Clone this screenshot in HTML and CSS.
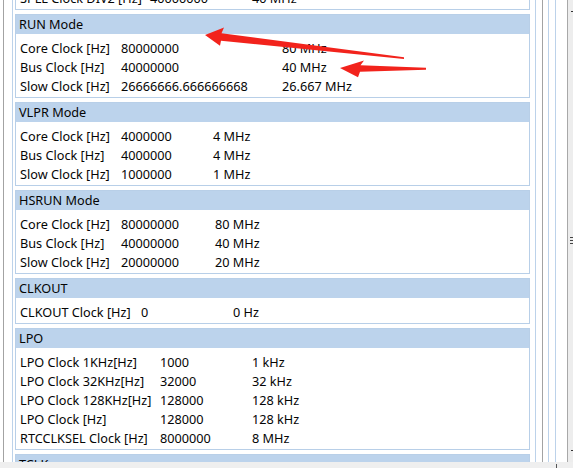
FILE: index.html
```html
<!DOCTYPE html>
<html>
<head>
<meta charset="utf-8">
<link rel="stylesheet" href="styles.css">
</head>
<body>
<div class="screen">
  <div class="main">
    <div class="outer">
      <div class="inner">
        <div class="list">
          <section class="sec">
            <div class="hdr">SPLL</div>
            <div class="rows c-spll">
              <span>SPLL Clock DIV2 [Hz]</span><span>40000000</span><span>40 MHz</span>
            </div>
          </section>
          <section class="sec">
            <div class="hdr">RUN Mode</div>
            <div class="rows c-run">
              <span>Core Clock [Hz]</span><span>80000000</span><span>80 MHz</span>
              <span>Bus Clock [Hz]</span><span>40000000</span><span>40 MHz</span>
              <span>Slow Clock [Hz]</span><span>26666666.666666668</span><span>26.667 MHz</span>
            </div>
          </section>
          <section class="sec">
            <div class="hdr">VLPR Mode</div>
            <div class="rows c-vlpr">
              <span>Core Clock [Hz]</span><span>4000000</span><span>4 MHz</span>
              <span>Bus Clock [Hz]</span><span>4000000</span><span>4 MHz</span>
              <span>Slow Clock [Hz]</span><span>1000000</span><span>1 MHz</span>
            </div>
          </section>
          <section class="sec">
            <div class="hdr">HSRUN Mode</div>
            <div class="rows c-hsrun">
              <span>Core Clock [Hz]</span><span>80000000</span><span>80 MHz</span>
              <span>Bus Clock [Hz]</span><span>40000000</span><span>40 MHz</span>
              <span>Slow Clock [Hz]</span><span>20000000</span><span>20 MHz</span>
            </div>
          </section>
          <section class="sec">
            <div class="hdr">CLKOUT</div>
            <div class="rows c-clkout">
              <span>CLKOUT Clock [Hz]</span><span>0</span><span>0 Hz</span>
            </div>
          </section>
          <section class="sec">
            <div class="hdr">LPO</div>
            <div class="rows c-lpo">
              <span>LPO Clock 1KHz[Hz]</span><span>1000</span><span>1 kHz</span>
              <span>LPO Clock 32KHz[Hz]</span><span>32000</span><span>32 kHz</span>
              <span>LPO Clock 128KHz[Hz]</span><span>128000</span><span>128 kHz</span>
              <span>LPO Clock [Hz]</span><span>128000</span><span>128 kHz</span>
              <span>RTCCLKSEL Clock [Hz]</span><span>8000000</span><span>8 MHz</span>
            </div>
          </section>
          <section class="sec">
            <div class="hdr">TCLK</div>
            <div class="rows c-lpo">
              <span>TCLK0 Clock [Hz]</span><span>0</span><span>0 Hz</span>
            </div>
          </section>
        </div>
      </div>
    </div>
    <div class="side"></div>
    <div class="gapcol"></div>
    <div class="vbar">
      <i class="dash d-top"></i>
      <i class="grip"></i>
      <i class="dash d-bot"></i>
    </div>
  </div>
  <div class="hbar"><i class="hmark"></i></div>

  <svg class="arrows" width="573" height="468" viewBox="0 0 573 468">
    <polygon fill="#f2231c" points="205,35 224,27.5 221.5,33.3 404,57.2 404,59 221,40.8 220,45.8"/>
    <polygon fill="#f2231c" points="340,68 364,60.5 360.5,65.3 426,67.8 426,69.8 360,71.8 358,77.2"/>
  </svg>
</div>
</body>
</html>
```

FILE: styles.css
```css
* { box-sizing: border-box; }
html, body { margin: 0; padding: 0; }
body {
  width: 573px;
  height: 468px;
  overflow: hidden;
  background: #ffffff;
  font-family: "Noto Sans", "Open Sans", sans-serif;
  font-size: 12.7px;
  color: #050505;
}
.screen {
  position: relative;
  width: 573px;
  height: 468px;
  display: flex;
  flex-direction: column;
}
.main {
  flex: 1;
  display: flex;
  overflow: hidden;
}
.outer {
  margin-left: 3px;
  width: 540px;
  border-left: 1px solid #a3a3a3;
  border-right: 1px solid #a3a3a3;
  padding: 0 6px 0 8px;
}
.inner {
  height: 100%;
  border-left: 1px solid #bcd2ea;
  border-right: 1px solid #bcd2ea;
  padding: 0 5px 0 2px;
  overflow: hidden;
}
.list {
  margin-top: -36px;
  display: flex;
  flex-direction: column;
  gap: 4px;
}
.sec {
  border: 1px solid #b8cfe8;
  background: #ffffff;
}
.hdr {
  height: 19px;
  line-height: 19px;
  background: #bcd3ec;
  padding-left: 3px;
  white-space: nowrap;
}
.rows {
  display: grid;
  grid-auto-rows: 19px;
  line-height: 19px;
  padding: 5px 4px 1px 4px;
  white-space: nowrap;
}
.c-spll { grid-template-columns: 130px 102px 1fr; }
.c-run { grid-template-columns: 101px 161px 1fr; }
.c-vlpr { grid-template-columns: 101px 92px 1fr; }
.c-hsrun { grid-template-columns: 101px 94px 1fr; }
.c-clkout { grid-template-columns: 121px 92px 1fr; }
.c-lpo { grid-template-columns: 140px 92px 1fr; }

.side {
  margin-left: 5px;
  width: 8px;
  border-left: 1px solid #bcd2ea;
  border-right: 1px solid #bcd2ea;
}
.gapcol { width: 11px; }
.vbar {
  width: 6px;
  border-left: 1px solid #a8a8a8;
  background: #ededed;
  display: flex;
  flex-direction: column;
  align-items: flex-end;
}
.dash {
  display: block;
  width: 2px;
  height: 1px;
  background: #333;
}
.d-top { margin-top: 11px; }
.grip {
  display: block;
  margin-top: 225px;
  width: 3px;
  height: 8px;
  background: repeating-linear-gradient(#444 0 1px, #ededed 1px 3px);
}
.d-bot { margin-top: 205px; }
.hbar {
  height: 6px;
  background: #efefef;
  position: relative;
}
.hmark {
  display: block;
  margin-left: 556px;
  margin-top: 2px;
  width: 1px;
  height: 4px;
  background: #555;
}
.arrows {
  position: absolute;
  left: 0;
  top: 0;
  pointer-events: none;
}
```
